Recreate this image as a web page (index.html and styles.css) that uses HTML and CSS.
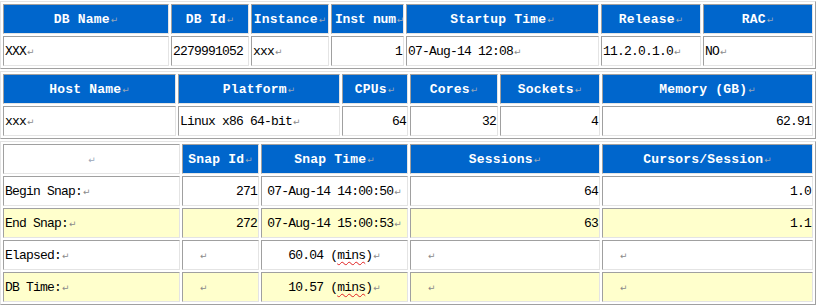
FILE: index.html
```html
<!DOCTYPE html>
<html lang="en">
<head>
  <meta charset="UTF-8" />
  <title>AWR Report</title>
  <link rel="stylesheet" href="styles.css">
</head>
<body>
  <!-- шапка отчёта AWR: база, хост, снапшоты -->
  <table class="awr db-info">
    <tr>
      <th>DB Name<span class="pm">↵</span></th>
      <th>DB Id<span class="pm">↵</span></th>
      <th>Instance<span class="pm">↵</span></th>
      <th class="tight">Inst num<span class="pm">↵</span></th>
      <th>Startup Time<span class="pm">↵</span></th>
      <th>Release<span class="pm">↵</span></th>
      <th>RAC<span class="pm">↵</span></th>
    </tr>
    <tr>
      <td>XXX<span class="pm">↵</span></td>
      <td>2279991052</td>
      <td>xxx<span class="pm">↵</span></td>
      <td class="num">1</td>
      <td>07-Aug-14 12:08<span class="pm">↵</span></td>
      <td>11.2.0.1.0<span class="pm">↵</span></td>
      <td>NO<span class="pm">↵</span></td>
    </tr>
  </table>

  <table class="awr host-info">
    <tr>
      <th>Host Name<span class="pm">↵</span></th>
      <th>Platform<span class="pm">↵</span></th>
      <th>CPUs<span class="pm">↵</span></th>
      <th>Cores<span class="pm">↵</span></th>
      <th>Sockets<span class="pm">↵</span></th>
      <th>Memory (GB)<span class="pm">↵</span></th>
    </tr>
    <tr>
      <td>xxx<span class="pm">↵</span></td>
      <td>Linux x86 64-bit<span class="pm">↵</span></td>
      <td class="num">64</td>
      <td class="num">32</td>
      <td class="num">4</td>
      <td class="num">62.91</td>
    </tr>
  </table>

  <table class="awr snap-info">
    <tr>
      <th class="blank"><span class="pm">↵</span></th>
      <th>Snap Id<span class="pm">↵</span></th>
      <th>Snap Time<span class="pm">↵</span></th>
      <th>Sessions<span class="pm">↵</span></th>
      <th>Cursors/Session<span class="pm">↵</span></th>
    </tr>
    <tr>
      <td>Begin Snap:<span class="pm">↵</span></td>
      <td class="num">271</td>
      <td class="mid">07-Aug-14 14:00:50<span class="pm">↵</span></td>
      <td class="num">64</td>
      <td class="num">1.0</td>
    </tr>
    <tr class="alt">
      <td>End Snap:<span class="pm">↵</span></td>
      <td class="num">272</td>
      <td class="mid">07-Aug-14 15:00:53<span class="pm">↵</span></td>
      <td class="num">63</td>
      <td class="num">1.1</td>
    </tr>
    <tr>
      <td>Elapsed:<span class="pm">↵</span></td>
      <td class="empty"><span class="pm">↵</span></td>
      <td class="mid">60.04 (<span class="typo">mins</span>)<span class="pm">↵</span></td>
      <td class="empty"><span class="pm">↵</span></td>
      <td class="empty"><span class="pm">↵</span></td>
    </tr>
    <tr class="alt">
      <td>DB Time:<span class="pm">↵</span></td>
      <td class="empty"><span class="pm">↵</span></td>
      <td class="mid">10.57 (<span class="typo">mins</span>)<span class="pm">↵</span></td>
      <td class="empty"><span class="pm">↵</span></td>
      <td class="empty"><span class="pm">↵</span></td>
    </tr>
  </table>
</body>
</html>
```

FILE: styles.css
```css
* { box-sizing: border-box; }
body { margin: 0; padding-top: 1px; background: #fff; font-family: "Liberation Mono", "DejaVu Sans Mono", monospace; font-size: 13px; letter-spacing: -0.8px; color: #000; }

/* таблицы в стиле border="1": рамка outset, ячейки inset */
.awr { width: 816px; table-layout: fixed; border-collapse: separate; border-spacing: 2px; border: 1px solid; border-color: #e4e4e4 #a0a0a0 #a0a0a0 #e4e4e4; margin: 0 0 2px 0; }
.awr th, .awr td { height: 30px; padding: 0 1px; border: 1px solid; border-color: #a0a0a0 #e4e4e4 #e4e4e4 #a0a0a0; white-space: nowrap; overflow: hidden; vertical-align: middle; }
.awr th { background: #0066cc; color: #fff; font-weight: bold; letter-spacing: 0.2px; text-align: center; }
.awr th.tight { text-align: left; padding-left: 3px; letter-spacing: -0.2px; }
.awr th.blank { background: #fff; }
.awr td { text-align: left; }
.awr td.num { text-align: right; }
.awr td.mid { text-align: center; }
.awr td.empty { padding-left: 16px; }
.awr tr.alt td { background: #ffffcc; }

/* знак абзаца */
.pm { font-family: "DejaVu Sans", sans-serif; font-size: 9px; font-weight: normal; letter-spacing: 0; color: #8a8a8a; margin-left: 1px; }
th .pm { color: #9aa6b8; }

/* подчёркивание проверки орфографии */
.typo { text-decoration: underline wavy #e02020; text-decoration-thickness: 1px; text-underline-offset: 2px; text-decoration-skip-ink: none; }

/* ширины колонок */
.db-info th:nth-child(1) { width: 166px; }
.db-info th:nth-child(2) { width: 78px; }
.db-info th:nth-child(3) { width: 78px; }
.db-info th:nth-child(4) { width: 73px; }
.db-info th:nth-child(5) { width: 193px; }
.db-info th:nth-child(6) { width: 100px; }
.db-info th:nth-child(7) { width: 110px; }

.host-info th:nth-child(1) { width: 173px; }
.host-info th:nth-child(2) { width: 162px; }
.host-info th:nth-child(3) { width: 66px; }
.host-info th:nth-child(4) { width: 88px; }
.host-info th:nth-child(5) { width: 100px; }
.host-info th:nth-child(6) { width: 211px; }

.snap-info th:nth-child(1) { width: 177px; }
.snap-info th:nth-child(2) { width: 77px; }
.snap-info th:nth-child(3) { width: 147px; }
.snap-info th:nth-child(4) { width: 190px; }
.snap-info th:nth-child(5) { width: 211px; }
```
